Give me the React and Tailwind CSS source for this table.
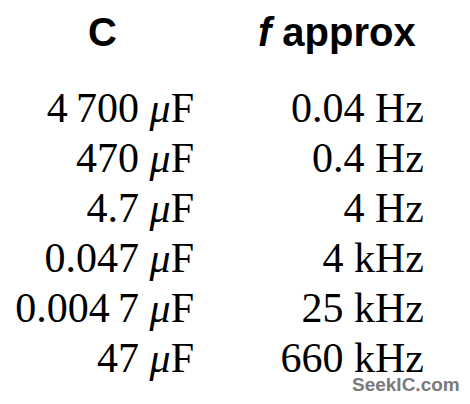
import React from 'react'

const rows = [
  ['4\u2009700', '0.04 Hz'],
  ['470', '0.4 Hz'],
  ['4.7', '4 Hz'],
  ['0.047', '4 kHz'],
  ['0.004\u20097', '25 kHz'],
  ['47', '660 kHz'],
]

export default function App() {
  return (
    <div className="relative w-[470px] h-[404px] bg-white text-black overflow-hidden">
      {/* Column headings */}
      <div className="flex pt-[8px] font-['Liberation_Sans',Arial,sans-serif] font-bold text-[40px] leading-[48px]">
        <div className="ml-[88px]">C</div>
        <div className="ml-[141px]">
          <span className="italic">f</span> approx
        </div>
      </div>

      {/* Values */}
      <div className="flex mt-[35px] font-['Liberation_Serif','Times_New_Roman',serif] text-[42px] leading-[34px]">
        <div className="w-[194px] flex flex-col gap-[16px] items-end">
          {rows.map(([c]) => (
            <div key={c}>
              {c} <span className="italic">μ</span>F
            </div>
          ))}
        </div>
        <div className="w-[230px] flex flex-col gap-[16px] items-end">
          {rows.map(([, f]) => (
            <div key={f}>{f}</div>
          ))}
        </div>
      </div>

      {/* Watermark */}
      <div className="absolute left-[352px] top-[377px] font-['Liberation_Sans',Arial,sans-serif] font-bold text-[19px] leading-[16px] text-[#7a7a7a]">
        SeekIC.com
      </div>
    </div>
  )
}
